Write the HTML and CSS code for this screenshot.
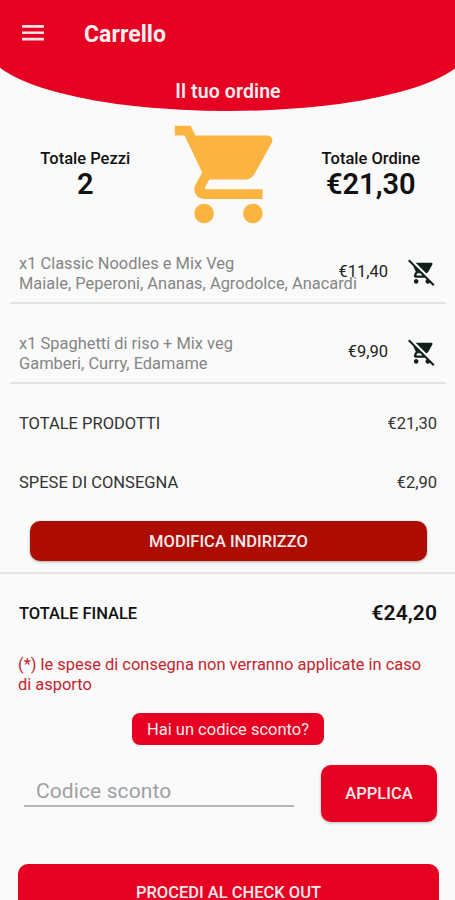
FILE: index.html
```html
<!DOCTYPE html>
<html lang="it">
<head>
<meta charset="utf-8">
<title>Carrello</title>
<link rel="stylesheet" href="styles.css">
</head>
<body>
<div class="screen">
  <header class="header">
    <div class="bar">
      <svg class="menu" width="22" height="16" viewBox="0 0 22 16"><path fill="#fff" fill-opacity=".88" d="M0 0h22v2.7H0zM0 6.4h22v2.7H0zM0 12.8h22v2.7H0z"/></svg>
      <h1 class="title"><span>Carrello</span></h1>
    </div>
    <p class="subtitle"><span>Il tuo ordine</span></p>
  </header>
  <section class="summary">
    <div class="stat"><span class="label">Totale Pezzi</span><strong class="value">2</strong></div>
    <svg class="cart" viewBox="0 0 24 24"><path d="M7 18c-1.1 0-1.99.9-1.99 2S5.9 22 7 22s2-.9 2-2-.9-2-2-2zM1 2v2h2l3.600 7.590-1.350 2.450c-.16.280-.25.610-.25.960 0 1.100.9 2 2 2h12v-2H7.420c-.14 0-.25-.11-.25-.25l.03-.12.9-1.630h7.450c.75 0 1.410-.41 1.750-1.030l3.580-6.490c.08-.14.120-.31.120-.48 0-.55-.45-1-1-1H5.210l-.94-2H1zm16 16c-1.100 0-1.990.9-1.990 2s.89 2 1.990 2 2-.9 2-2-.9-2-2-2z"/></svg>
    <div class="stat"><span class="label">Totale Ordine</span><strong class="value">€21,30</strong></div>
  </section>
  <ul class="items">
    <li class="item">
      <p class="name"><span class="l1">x1 Classic Noodles e Mix Veg</span><br><span class="l2">Maiale, Peperoni, Ananas, Agrodolce, Anacardi</span></p>
      <span class="price">€11,40</span>
      <svg class="remove" viewBox="0 0 24 24"><path d="M22.730 22.730L2.770 2.770 2 2l-.73-.73L0 2.540l4.390 4.390 2.210 4.660-1.350 2.450c-.16.280-.25.610-.25.960 0 1.100.9 2 2 2h7.460l1.380 1.380c-.5.360-.83.950-.83 1.620 0 1.100.89 2 1.990 2 .67 0 1.260-.33 1.620-.84L21.460 24l1.270-1.270zM7.420 15c-.14 0-.25-.11-.25-.25l.03-.12.9-1.630h2.360l2 2H7.420zm8.130-2c.75 0 1.410-.41 1.750-1.030l3.580-6.490c.08-.14.120-.31.120-.48 0-.55-.45-1-1-1H6.540l9.010 9zM7 18c-1.100 0-1.990.9-1.990 2S5.900 22 7 22s2-.9 2-2-.9-2-2-2z"/></svg>
    </li>
    <li class="item">
      <p class="name"><span class="l1">x1 Spaghetti di riso + Mix veg</span><br><span class="l2">Gamberi, Curry, Edamame</span></p>
      <span class="price">€9,90</span>
      <svg class="remove" viewBox="0 0 24 24"><path d="M22.730 22.730L2.770 2.770 2 2l-.73-.73L0 2.540l4.390 4.390 2.210 4.660-1.350 2.450c-.16.280-.25.610-.25.960 0 1.100.9 2 2 2h7.460l1.380 1.380c-.5.360-.83.950-.83 1.620 0 1.100.89 2 1.990 2 .67 0 1.260-.33 1.620-.84L21.460 24l1.270-1.270zM7.420 15c-.14 0-.25-.11-.25-.25l.03-.12.9-1.630h2.360l2 2H7.420zm8.130-2c.75 0 1.410-.41 1.750-1.030l3.580-6.490c.08-.14.120-.31.120-.48 0-.55-.45-1-1-1H6.540l9.010 9zM7 18c-1.100 0-1.990.9-1.990 2S5.900 22 7 22s2-.9 2-2-.9-2-2-2z"/></svg>
    </li>
  </ul>
  <section class="costs">
    <div class="row"><span>TOTALE PRODOTTI</span><span class="amount">€21,30</span></div>
    <div class="row"><span>SPESE DI CONSEGNA</span><span class="amount">€2,90</span></div>
    <button class="btn edit"><span>MODIFICA INDIRIZZO</span></button>
  </section>
  <section class="final">
    <div class="row total"><span>TOTALE FINALE</span><span class="amount">€24,20</span></div>
    <p class="note">(*) le spese di consegna non verranno applicate in caso<br>di asporto</p>
    <button class="btn coupon"><span>Hai un codice sconto?</span></button>
    <div class="form">
      <div class="field"><span>Codice sconto</span></div>
      <button class="btn apply"><span>APPLICA</span></button>
    </div>
    <button class="btn checkout"><span>PROCEDI AL CHECK OUT</span></button>
  </section>
</div>
</body>
</html>
```
FILE: styles.css
```css
* { box-sizing: border-box; margin: 0; padding: 0; }
body { background: #fafafa; font-family: Roboto, "Liberation Sans", sans-serif; color: #111; overflow: hidden; }
.screen { width: 455px; height: 900px; overflow: hidden; }
.header { position: relative; height: 111px; overflow: hidden; color: #fff; }
.header::before { content: ""; position: absolute; z-index: -1; top: 0; bottom: 0; left: -12.5px; width: 480px; background: #e60021; border-radius: 0 0 240px 240px / 0 0 63px 63px; }
.bar { display: flex; align-items: center; height: 68px; padding-left: 22px; }
.menu { margin-top: -2px; }
.title { margin: 2px 0 0 40px; font-size: 23px; line-height: 28px; font-weight: 700; letter-spacing: .05px; color: #ffeef0; }
.subtitle { margin-top: 12px; padding-left: 1px; text-align: center; font-size: 19.500px; line-height: 24px; font-weight: 600; letter-spacing: .1px; color: #ffeef0; }
.summary { display: flex; height: 125px; padding-top: 5px; }
.stat { width: 169.600px; padding: 33px 0 0 1px; display: flex; flex-direction: column; align-items: center; }
.stat:last-child { width: auto; flex: 1; padding-left: 0; }
.label { font-size: 16.500px; line-height: 20px; font-weight: 500; }
.value { font-size: 29px; line-height: 31px; font-weight: 600; }
.cart { width: 117px; height: 117px; fill: #fcb441; }
.items { list-style: none; padding: 0 9px 0 10px; }
.item { display: flex; height: 68px; padding: 18px 10px 0 9px; border-bottom: 2px solid #e2e2e2; }
.item + .item { height: 80px; padding-top: 30px; }
.name { flex: 1; min-width: 0; white-space: nowrap; font-size: 16.450px; line-height: 19.500px; color: #858585; }
.price { flex: none; width: 60px; text-align: right; font-size: 16.500px; line-height: 20px; margin: 8px 20px 0 0; color: #222; }
.remove { flex: none; width: 28px; height: 28px; margin-top: 4px; fill: #10201a; }
.costs { height: 190px; padding: 29px 18px 0 19px; border-bottom: 2px solid #e4e4e4; }
.row { display: flex; justify-content: space-between; align-items: center; height: 20px; font-size: 16.500px; color: #333; }
.row + .row { margin-top: 39px; }
.btn { display: flex; align-items: center; justify-content: center; border: 0; font-family: inherit; background: #e60021; color: #ffe9ec; border-radius: 10px; font-size: 16.500px; font-weight: 500; white-space: nowrap; }
.edit { width: 397px; height: 40px; margin: 29px 0 0 11px; background: #ad0c00; box-shadow: 0 1px 3px #0005; }
.final { padding: 29px 18px 0; }
.total { padding-left: 1px; color: #111; font-weight: 500; }
.total .amount { font-size: 21px; font-weight: 600; letter-spacing: .1px; }
.note { margin-top: 32px; font-size: 16.450px; line-height: 19.500px; color: #c4242e; white-space: nowrap; }
.coupon { width: 192px; height: 32px; margin: 19px 0 0 114px; padding-top: 1px; border-radius: 8px; font-weight: 400; }
.form { display: flex; justify-content: space-between; margin-top: 20px; padding-left: 6px; }
.field { width: 270px; height: 42px; padding: 14px 0 0 12px; border-bottom: 2px solid #b4b4b4; font-size: 21px; line-height: 24px; letter-spacing: .1px; color: #a0a0a0; }
.apply { width: 116px; height: 57px; box-shadow: 0 1px 3px #0004; }
.checkout { width: 421px; height: 57px; margin-top: 42px; }
```
